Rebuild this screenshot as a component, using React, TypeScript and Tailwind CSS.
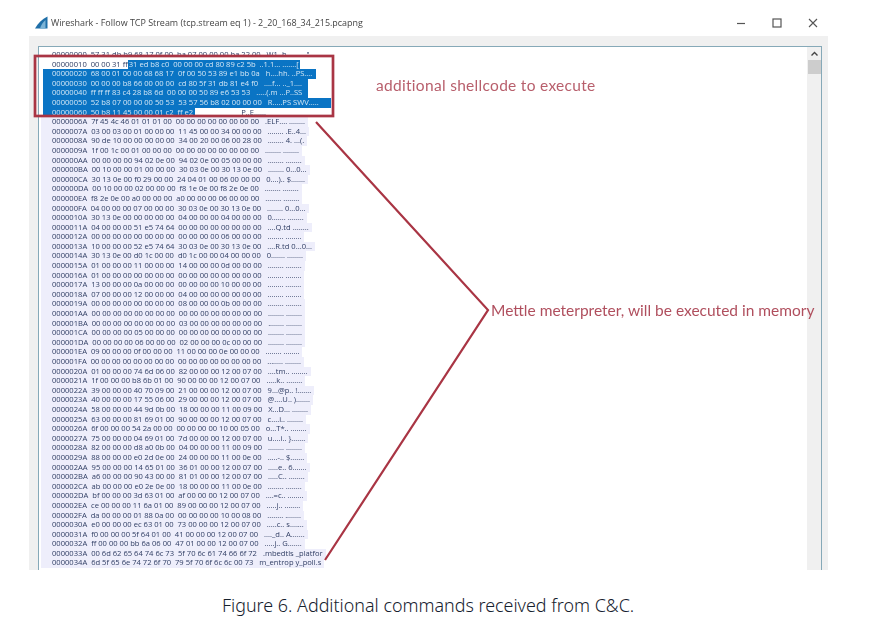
const selected = [
  '00000020  68 00 01 00 00 68 68 17  0f 00 50 53 89 e1 bb 0a   h....hh. ..PS.... ',
  '00000030  00 00 00 b8 66 00 00 00  cd 80 5f 31 db 81 e4 f0   ....f... .._1....  ',
  '00000040  ff ff ff 83 c4 28 b8 6d  00 00 00 50 89 e6 53 53   .....(.m ...P..SS  ',
  '00000050  52 b8 07 00 00 00 50 53  53 57 56 b8 02 00 00 00   R.....PS SWV.....     ',
]

const rows = [
  '0000006A  7f 45 4c 46 01 01 01 00  00 00 00 00 00 00 00 00   .ELF.... ........',
  '0000007A  03 00 03 00 01 00 00 00  11 45 00 00 34 00 00 00   ........ .E..4...',
  '0000008A  90 de 10 00 00 00 00 00  34 00 20 00 06 00 28 00   ........ 4. ...(.',
  '0000009A  1f 00 1c 00 01 00 00 00  00 00 00 00 00 00 00 00   ........ ........',
  '000000AA  00 00 00 00 94 02 0e 00  94 02 0e 00 05 00 00 00   ........ ........',
  '000000BA  00 10 00 00 01 00 00 00  30 03 0e 00 30 13 0e 00   ........ 0...0...',
  '000000CA  30 13 0e 00 f0 29 00 00  24 04 01 00 06 00 00 00   0....).. $.......',
  '000000DA  00 10 00 00 02 00 00 00  f8 1e 0e 00 f8 2e 0e 00   ........ ........',
  '000000EA  f8 2e 0e 00 a0 00 00 00  a0 00 00 00 06 00 00 00   ........ ........',
  '000000FA  04 00 00 00 07 00 00 00  30 03 0e 00 30 13 0e 00   ........ 0...0...',
  '0000010A  30 13 0e 00 00 00 00 00  04 00 00 00 04 00 00 00   0....... ........',
  '0000011A  04 00 00 00 51 e5 74 64  00 00 00 00 00 00 00 00   ....Q.td ........',
  '0000012A  00 00 00 00 00 00 00 00  00 00 00 00 06 00 00 00   ........ ........',
  '0000013A  10 00 00 00 52 e5 74 64  30 03 0e 00 30 13 0e 00   ....R.td 0...0...',
  '0000014A  30 13 0e 00 d0 1c 00 00  d0 1c 00 00 04 00 00 00   0....... ........',
  '0000015A  01 00 00 00 11 00 00 00  14 00 00 00 0d 00 00 00   ........ ........',
  '0000016A  01 00 00 00 00 00 00 00  00 00 00 00 00 00 00 00   ........ ........',
  '0000017A  13 00 00 00 0a 00 00 00  00 00 00 00 10 00 00 00   ........ ........',
  '0000018A  07 00 00 00 12 00 00 00  04 00 00 00 00 00 00 00   ........ ........',
  '0000019A  00 00 00 00 00 00 00 00  08 00 00 00 0b 00 00 00   ........ ........',
  '000001AA  00 00 00 00 00 00 00 00  00 00 00 00 00 00 00 00   ........ ........',
  '000001BA  00 00 00 00 00 00 00 00  03 00 00 00 00 00 00 00   ........ ........',
  '000001CA  00 00 00 00 05 00 00 00  00 00 00 00 00 00 00 00   ........ ........',
  '000001DA  00 00 00 00 06 00 00 00  02 00 00 00 0c 00 00 00   ........ ........',
  '000001EA  09 00 00 00 0f 00 00 00  11 00 00 00 0e 00 00 00   ........ ........',
  '000001FA  00 00 00 00 00 00 00 00  00 00 00 00 00 00 00 00   ........ ........',
  '0000020A  01 00 00 00 74 6d 06 00  82 00 00 00 12 00 07 00   ....tm.. ........',
  '0000021A  1f 00 00 00 b8 6b 01 00  90 00 00 00 12 00 07 00   .....k.. ........',
  '0000022A  39 00 00 00 40 70 09 00  21 00 00 00 12 00 07 00   9...@p.. !.......',
  '0000023A  40 00 00 00 17 55 06 00  29 00 00 00 12 00 07 00   @....U.. ).......',
  '0000024A  58 00 00 00 44 9d 0b 00  18 00 00 00 11 00 09 00   X...D... ........',
  '0000025A  63 00 00 00 81 69 01 00  90 00 00 00 12 00 07 00   c....i.. ........',
  '0000026A  6f 00 00 00 54 2a 00 00  00 00 00 00 10 00 05 00   o...T*.. ........',
  '0000027A  75 00 00 00 04 69 01 00  7d 00 00 00 12 00 07 00   u....i.. }.......',
  '0000028A  82 00 00 00 d8 a0 0b 00  04 00 00 00 11 00 09 00   ........ ........',
  '0000029A  88 00 00 00 e0 2d 0e 00  24 00 00 00 11 00 0e 00   .....-.. $.......',
  '000002AA  95 00 00 00 14 65 01 00  36 01 00 00 12 00 07 00   .....e.. 6.......',
  '000002BA  a6 00 00 00 90 43 00 00  81 01 00 00 12 00 07 00   .....C.. ........',
  '000002CA  ab 00 00 00 e0 2e 0e 00  18 00 00 00 11 00 0e 00   ........ ........',
  '000002DA  bf 00 00 00 3d 63 01 00  af 00 00 00 12 00 07 00   ....=c.. ........',
  '000002EA  ce 00 00 00 11 6a 01 00  89 00 00 00 12 00 07 00   .....j.. ........',
  '000002FA  da 00 00 00 01 88 0a 00  00 00 00 00 10 00 08 00   ........ ........',
  '0000030A  e0 00 00 00 ec 63 01 00  73 00 00 00 12 00 07 00   .....c.. s.......',
  '0000031A  f0 00 00 00 5f 64 01 00  41 00 00 00 12 00 07 00   ...._d.. A.......',
  '0000032A  ff 00 00 00 bb 6a 06 00  47 01 00 00 12 00 07 00   .....j.. G.......',
  '0000033A  00 6d 62 65 64 74 6c 73  5f 70 6c 61 74 66 6f 72   .mbedtls _platfor',
  '0000034A  6d 5f 65 6e 74 72 6f 70  79 5f 70 6f 6c 6c 00 73   m_entrop y_poll.s',
]

export default function App() {
  return (
    <div className="relative w-[874px] h-[625px] overflow-hidden bg-white font-['Open_Sans',sans-serif]">
      {/* window title */}
      <div className="flex items-center h-[36px] pl-[35px] pr-[56px] pt-[9px]">
        <svg width="13" height="13" viewBox="0 0 13 13" className="mr-[3px]">
          <path d="M0 12.5 C3 7 7 3 12.5 0.5 L12.5 12.5 Z" fill="#1f6fa8" />
          <path d="M5 12.5 C6 9 8 6 10.5 4 L10.5 12.5 Z" fill="#7db4d6" />
        </svg>
        <span className="text-[8.95px] text-[#444] blur-[0.3px] whitespace-nowrap">
          Wireshark - Follow TCP Stream (tcp.stream eq 1) - 2_20_168_34_215.pcapng
        </span>
        <div className="ml-auto flex items-center gap-[26px]">
          <svg width="10" height="10" viewBox="0 0 10 10"><path d="M1 5.5H9" stroke="#555" strokeWidth="1.2" /></svg>
          <svg width="10" height="10" viewBox="0 0 10 10"><rect x="1" y="1" width="8" height="8" fill="none" stroke="#555" strokeWidth="1.2" /></svg>
          <svg width="10" height="10" viewBox="0 0 10 10"><path d="M1 1L9 9M9 1L1 9" stroke="#555" strokeWidth="1.1" /></svg>
        </div>
      </div>

      {/* window body */}
      <div className="ml-[29px] w-[799px] h-[534px] bg-[#f0f0f0] pt-[10px] pl-[9px] pr-[6px]">
        <div className="flex h-[524px] bg-white border-l border-t border-r border-[#86a9b8]">
          <div className="flex-1 overflow-hidden pt-[3px] text-[7.6px] leading-[9.6px] text-[#2f3d63] whitespace-pre blur-[0.25px]">
            <div className="h-[9.6px] pl-[13px]">00000000  57 31 db b9 68 17 0f 00  ba 07 00 00 00 ba 22 00   W1..h... ......"</div>
            <div className="h-[9.6px] pl-[13px]">
              <span>00000010  00 00 31 ff</span>
              <span className="inline-block h-[9.6px] pl-[1px] bg-[#0a74c4] text-[#d2e6f5] pr-[1px]">31 ed b8 c0  00 00 00 cd 80 89 c2 5b  ..1.1... .......[</span>
            </div>
            {selected.map(r => (
              <div key={r} className="h-[9.6px]">
                <span className="inline-block h-[9.6px] pl-[9px] pr-[2px] ml-[4px] bg-[#0a74c4] text-[#d2e6f5]">{r}</span>
              </div>
            ))}
            <div className="h-[9.6px]">
              <span className="inline-block h-[9.6px] pl-[9px] pr-[2px] ml-[4px] bg-[#0a74c4] text-[#d2e6f5]">00000060  50 b8 11 45 00 00 01 c2  ff e2</span>
              <span className="ml-[46px]">P..E......</span>
            </div>
            {rows.map(r => (
              <div key={r} className="h-[9.6px] ml-[2px]">
                <span className="inline-block h-[9.6px] pl-[11px] pr-[3px] bg-[#eeeefb]">{r}</span>
              </div>
            ))}
          </div>
          {/* scrollbar */}
          <div className="w-[14px] bg-[#f0f0f0] flex flex-col items-center">
            <svg width="9" height="12" viewBox="0 0 9 12" className="mt-[1px]">
              <path d="M1.5 7.5L4.5 4.5L7.5 7.5" fill="none" stroke="#444" strokeWidth="1.4" />
            </svg>
            <div className="w-[13px] h-[14px] bg-[#cdcdcd]" />
          </div>
        </div>
      </div>

      <p className="pl-[222px] pt-[23px] text-[17.9px] leading-[24px] text-[#16212e] font-['Noto_Sans',sans-serif] font-light whitespace-nowrap">
        Figure 6. Additional commands received from C&amp;C.
      </p>

      {/* annotations drawn over the screenshot */}
      <svg width="874" height="625" className="absolute left-0 top-0 pointer-events-none">
        <rect x="35" y="56" width="298" height="60" fill="none" stroke="#a93544" strokeWidth="2.7" />
        <path d="M316 122L488 310L325 560" fill="none" stroke="#a93544" strokeWidth="2.2" />
      </svg>
      <span className="absolute left-[376px] top-[75px] text-[15.5px] leading-[20px] tracking-[0.3px] text-[#b85f6c] font-['Lato',sans-serif] whitespace-nowrap blur-[0.3px]">
        additional shellcode to execute
      </span>
      <span className="absolute left-[491px] top-[300px] text-[15.5px] leading-[20px] text-[#b04f5e] font-['Lato',sans-serif] whitespace-nowrap blur-[0.3px]">
        Mettle meterpreter, will be executed in memory
      </span>
    </div>
  )
}
